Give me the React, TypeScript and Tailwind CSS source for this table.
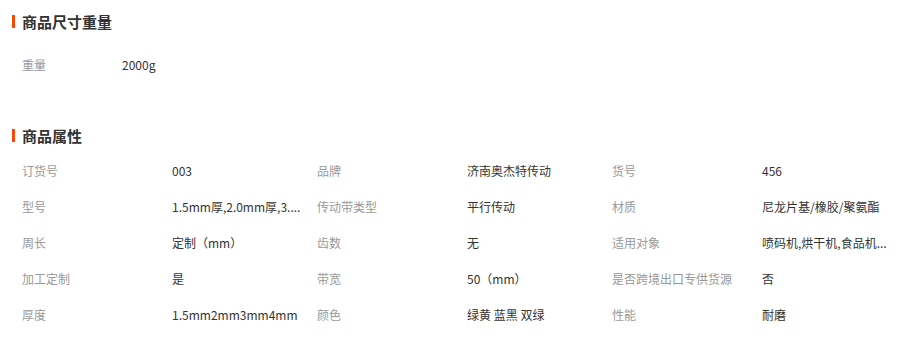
const sizeRows = [{ label: '重量', value: '2000g' }]

const attrRows = [
    [
        { label: '订货号', value: '003' },
        { label: '品牌', value: '济南奥杰特传动' },
        { label: '货号', value: '456' },
    ],
    [
        { label: '型号', value: '1.5mm厚,2.0mm厚,3....' },
        { label: '传动带类型', value: '平行传动' },
        { label: '材质', value: '尼龙片基/橡胶/聚氨酯' },
    ],
    [
        { label: '周长', value: '定制（mm）' },
        { label: '齿数', value: '无' },
        { label: '适用对象', value: '喷码机,烘干机,食品机...' },
    ],
    [
        { label: '加工定制', value: '是' },
        { label: '带宽', value: '50（mm）' },
        { label: '是否跨境出口专供货源', value: '否' },
    ],
    [
        { label: '厚度', value: '1.5mm2mm3mm4mm' },
        { label: '颜色', value: '绿黄 蓝黑 双绿' },
        { label: '性能', value: '耐磨' },
    ],
]

function SectionTitle({ title, className }: { title: string; className?: string }) {
    return (
        <div className={`flex h-[32px] items-center pl-[12px] ${className || ''}`}>
            <span className="h-[13px] w-[3px] bg-[#ff4400]" />
            <h2 className="ml-[7px] text-[15px] font-bold leading-none text-[#333]">{title}</h2>
        </div>
    )
}

export default function App() {
    return (
        <div
            className="w-[904px] h-[337px] overflow-hidden bg-white pt-[5px]"
            style={{ fontFamily: '"Noto Sans CJK SC", "Microsoft YaHei", sans-serif' }}
        >
            <SectionTitle title="商品尺寸重量" />
            <div className="mt-[10px] px-[22px] text-[12px]">
                {sizeRows.map((row) => (
                    <div key={row.label} className="flex h-9 items-center">
                        <span className="w-[100px] text-[#999]">{row.label}</span>
                        <span className="text-[#333]">{row.value}</span>
                    </div>
                ))}
            </div>

            <SectionTitle title="商品属性" className="mt-[36px]" />
            <div className="mt-[2px] px-[22px] text-[12px]">
                {attrRows.map((row, i) => (
                    <div key={i} className="flex h-9 items-center">
                        {row.map((cell) => (
                            <div key={cell.label} className="flex w-[295px] shrink-0 items-center">
                                <span className="w-[150px] shrink-0 whitespace-nowrap text-[#999]">
                                    {cell.label}
                                </span>
                                <span className="whitespace-nowrap text-[#333]">{cell.value}</span>
                            </div>
                        ))}
                    </div>
                ))}
            </div>
        </div>
    )
}
